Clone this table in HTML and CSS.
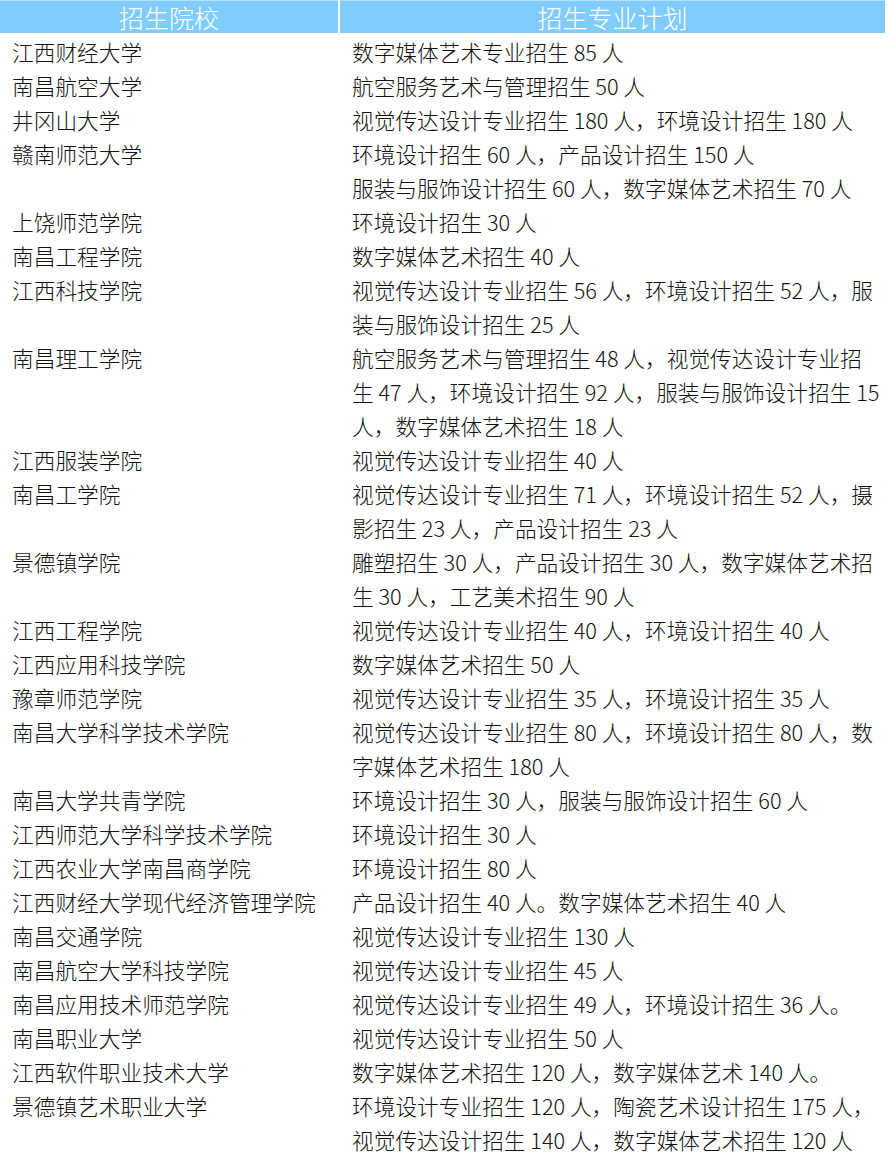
FILE: index.html
```html
<!DOCTYPE html>
<html lang="zh-CN">
<head>
<meta charset="utf-8">
<title>招生计划</title>
<link rel="stylesheet" href="styles.css">
</head>
<body>
<div class="plan">
  <div class="head">招生院校</div>
  <div class="head">招生专业计划</div>

  <div class="school">江西财经大学</div><div class="major">数字媒体艺术专业招生 85 人</div>
  <div class="school">南昌航空大学</div><div class="major">航空服务艺术与管理招生 50 人</div>
  <div class="school">井冈山大学</div><div class="major">视觉传达设计专业招生 180 人，环境设计招生 180 人</div>
  <div class="school">赣南师范大学</div><div class="major">环境设计招生 60 人，产品设计招生 150 人<br>服装与服饰设计招生 60 人，数字媒体艺术招生 70 人</div>
  <div class="school">上饶师范学院</div><div class="major">环境设计招生 30 人</div>
  <div class="school">南昌工程学院</div><div class="major">数字媒体艺术招生 40 人</div>
  <div class="school">江西科技学院</div><div class="major">视觉传达设计专业招生 56 人，环境设计招生 52 人，服<br>装与服饰设计招生 25 人</div>
  <div class="school">南昌理工学院</div><div class="major">航空服务艺术与管理招生 48 人，视觉传达设计专业招<br>生 47 人，环境设计招生 92 人，服装与服饰设计招生 15<br>人，数字媒体艺术招生 18 人</div>
  <div class="school">江西服装学院</div><div class="major">视觉传达设计专业招生 40 人</div>
  <div class="school">南昌工学院</div><div class="major">视觉传达设计专业招生 71 人，环境设计招生 52 人，摄<br>影招生 23 人，产品设计招生 23 人</div>
  <div class="school">景德镇学院</div><div class="major">雕塑招生 30 人，产品设计招生 30 人，数字媒体艺术招<br>生 30 人，工艺美术招生 90 人</div>
  <div class="school">江西工程学院</div><div class="major">视觉传达设计专业招生 40 人，环境设计招生 40 人</div>
  <div class="school">江西应用科技学院</div><div class="major">数字媒体艺术招生 50 人</div>
  <div class="school">豫章师范学院</div><div class="major">视觉传达设计专业招生 35 人，环境设计招生 35 人</div>
  <div class="school">南昌大学科学技术学院</div><div class="major">视觉传达设计专业招生 80 人，环境设计招生 80 人，数<br>字媒体艺术招生 180 人</div>
  <div class="school">南昌大学共青学院</div><div class="major">环境设计招生 30 人，服装与服饰设计招生 60 人</div>
  <div class="school">江西师范大学科学技术学院</div><div class="major">环境设计招生 30 人</div>
  <div class="school">江西农业大学南昌商学院</div><div class="major">环境设计招生 80 人</div>
  <div class="school">江西财经大学现代经济管理学院</div><div class="major">产品设计招生 40 人。数字媒体艺术招生 40 人</div>
  <div class="school">南昌交通学院</div><div class="major">视觉传达设计专业招生 130 人</div>
  <div class="school">南昌航空大学科技学院</div><div class="major">视觉传达设计专业招生 45 人</div>
  <div class="school">南昌应用技术师范学院</div><div class="major">视觉传达设计专业招生 49 人，环境设计招生 36 人。</div>
  <div class="school">南昌职业大学</div><div class="major">视觉传达设计专业招生 50 人</div>
  <div class="school">江西软件职业技术大学</div><div class="major">数字媒体艺术招生 120 人，数字媒体艺术 140 人。</div>
  <div class="school">景德镇艺术职业大学</div><div class="major">环境设计专业招生 120 人，陶瓷艺术设计招生 175 人，<br>视觉传达设计招生 140 人，数字媒体艺术招生 120 人</div>
</div>
</body>
</html>
```

FILE: styles.css
```css
html, body {
  margin: 0;
  padding: 0;
  background: #ffffff;
}

.plan {
  width: 885px;
  display: grid;
  grid-template-columns: 338px 545px;
  column-gap: 2px;
  font-family: "Liberation Sans Narrow", "Noto Sans CJK SC", sans-serif;
  font-weight: 300;
  color: #111111;
}

.head {
  height: 32px;
  border-top: 1px solid #b6e0ff;
  margin-bottom: 2px;
  background: #80ccff;
  color: #ffffff;
  font-size: 25px;
  line-height: 32px;
  text-align: center;
}

.school,
.major {
  font-size: 21.7px;
  line-height: 34px;
  white-space: nowrap;
}

.school {
  padding-left: 12px;
}

.major {
  padding-left: 12px;
}
```
